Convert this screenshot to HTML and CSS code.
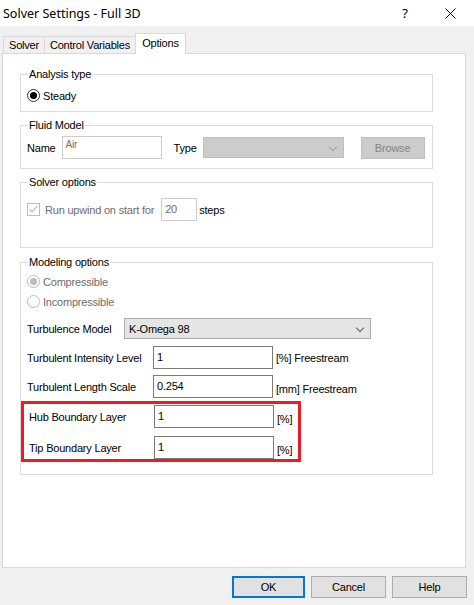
FILE: index.html
```html
<!DOCTYPE html>
<html lang="en">
<head>
  <meta charset="UTF-8" />
  <title>Solver Settings - Full 3D</title>
  <link rel="stylesheet" href="styles.css">
</head>
<body>
  <div class="titlebar">
    <span class="caption">Solver Settings - Full 3D</span>
    <span class="help-btn">?</span>
    <span class="close-btn">
      <svg width="11" height="11" viewBox="0 0 11 11"><path d="M0.5 0.5 L10.5 10.5 M10.5 0.5 L0.5 10.5" stroke="#000" stroke-width="1" fill="none"/></svg>
    </span>
  </div>

  <div class="tabs">
    <div class="tab t-solver">Solver</div>
    <div class="tab t-vars">Control Variables</div>
    <div class="tab t-options active">Options</div>
  </div>

  <div class="panel">
    <fieldset class="group g-analysis">
      <legend>Analysis type</legend>
      <label class="radio-row"><span class="radio checked"></span>Steady</label>
    </fieldset>

    <fieldset class="group g-fluid">
      <legend>Fluid Model</legend>
      <div class="row">
        <span class="lbl">Name</span>
        <span class="field disabled name-field">Air</span>
        <span class="lbl type-lbl">Type</span>
        <span class="combo disabled type-combo"><span class="chev"></span></span>
        <span class="btn disabled browse">Browse</span>
      </div>
    </fieldset>

    <fieldset class="group g-solver">
      <legend>Solver options</legend>
      <div class="row">
        <span class="check"><svg width="11" height="11" viewBox="0 0 11 11"><path d="M1.5 5.5 L4 8 L9.5 2" stroke="#bcbcbc" stroke-width="1.2" fill="none"/></svg></span>
        <span class="muted run-lbl">Run upwind on start for</span>
        <span class="field disabled steps-field">20</span>
        <span class="lbl">steps</span>
      </div>
    </fieldset>

    <fieldset class="group g-model">
      <legend>Modeling options</legend>
      <label class="radio-row muted"><span class="radio off dot"></span>Compressible</label>
      <label class="radio-row muted second"><span class="radio off"></span>Incompressible</label>

      <div class="row turb-row">
        <span class="lbl turb-lbl">Turbulence Model</span>
        <span class="combo turb-combo">K-Omega 98<span class="chev"></span></span>
      </div>

      <div class="row param">
        <span class="lbl param-lbl">Turbulent Intensity Level</span>
        <span class="field">1</span>
        <span class="unit">[%] Freestream</span>
      </div>
      <div class="row param length">
        <span class="lbl param-lbl">Turbulent Length Scale</span>
        <span class="field">0.254</span>
        <span class="unit low">[mm] Freestream</span>
      </div>

      <div class="highlight">
        <div class="row param">
          <span class="lbl param-lbl">Hub Boundary Layer</span>
          <span class="field">1</span>
          <span class="unit low">[%]</span>
        </div>
        <div class="row param tip">
          <span class="lbl param-lbl">Tip Boundary Layer</span>
          <span class="field">1</span>
          <span class="unit low">[%]</span>
        </div>
      </div>
    </fieldset>
  </div>

  <div class="actions">
    <span class="btn default">OK</span>
    <span class="btn">Cancel</span>
    <span class="btn">Help</span>
  </div>
</body>
</html>
```

FILE: styles.css
```css
body {
  margin: 0;
  background: #f0f0f0;
  font-family: "Liberation Sans", Arial, sans-serif;
  font-size: 11px;
  letter-spacing: -0.2px;
  color: #000;
}

/* window caption */
.titlebar {
  height: 26px;
  background: #fff;
  display: flex;
  align-items: center;
  padding-left: 3px;
  letter-spacing: 0;
}
.caption {
  font-family: "Noto Sans", sans-serif;
  font-size: 12.5px;
  flex: 1;
}
.help-btn {
  font-family: "Noto Sans", sans-serif;
  font-size: 13px;
  margin-right: 37px;
}
.close-btn {
  display: flex;
  margin-right: 18px;
}

/* tab strip */
.tabs {
  height: 27px;
  display: flex;
  align-items: flex-end;
  padding-left: 3px;
}
.tab {
  height: 16px;
  line-height: 16px;
  box-sizing: content-box;
  border: 1px solid #d9d9d9;
  border-bottom: none;
  border-right: none;
  text-align: center;
  background: #f0f0f0;
}
.t-solver { width: 40px; }
.t-vars { width: 90px; }
.tab.active {
  width: 49px;
  height: 20px;
  line-height: 19px;
  background: #fff;
  border-right: 1px solid #d9d9d9;
  margin-bottom: -1px;
  position: relative;
}

.panel {
  margin-left: 2px;
  width: 464px;
  height: 515px;
  box-sizing: border-box;
  background: #fff;
  border: 1px solid #d9d9d9;
  padding: 13px 0 0 17px;
}

/* group boxes */
.group {
  width: 413px;
  box-sizing: border-box;
  margin: 0;
  border: 1px solid #dcdcdc;
  padding: 0 6px 0 6px;
}
.group legend {
  padding: 0 1px;
  margin-left: 1px;
  line-height: 14px;
}
.g-analysis { padding-top: 8px; padding-bottom: 9px; }
.g-fluid { margin-top: 6px; padding-top: 4px; padding-bottom: 9px; }
.g-solver { margin-top: 6px; padding-top: 9px; padding-bottom: 26px; }
.g-model { margin-top: 7px; padding-top: 6px; padding-bottom: 12px; }

.row {
  display: flex;
  align-items: center;
}
.lbl { white-space: nowrap; }
.muted { color: #6d6d6d; }

.radio-row {
  display: flex;
  align-items: center;
  height: 13px;
  gap: 3px;
}
.radio-row.second { margin-top: 7px; }
.radio {
  width: 11px;
  height: 11px;
  border: 1px solid #333;
  border-radius: 50%;
  display: flex;
  align-items: center;
  justify-content: center;
}
.radio.checked::after {
  content: "";
  width: 7px;
  height: 7px;
  border-radius: 50%;
  background: #000;
}
.radio.off { border-color: #bcbcbc; }
.radio.dot::after {
  content: "";
  width: 7px;
  height: 7px;
  border-radius: 50%;
  background: #bcbcbc;
}

.check {
  width: 11px;
  height: 11px;
  border: 1px solid #bcbcbc;
  display: flex;
  margin-right: 5px;
}
.run-lbl { margin-right: 7px; }

/* edit boxes */
.field {
  width: 120px;
  height: 23px;
  box-sizing: border-box;
  border: 1px solid #7a7a7a;
  background: #fff;
  padding: 4px 0 0 3px;
  line-height: 13px;
}
.field.disabled {
  border-color: #cccccc;
  color: #6d6d6d;
}
.name-field { width: 100px; margin-left: 6px; padding-top: 1px; font-size: 10px; }
.steps-field { width: 36px; margin-right: 2px; }

.combo {
  height: 21px;
  box-sizing: border-box;
  border: 1px solid #acacac;
  background: #e5e5e5;
  display: flex;
  align-items: center;
  padding-left: 4px;
  position: relative;
}
.combo.disabled {
  background: #cccccc;
  border-color: #bfbfbf;
}
.chev {
  position: absolute;
  right: 7px;
  top: 6px;
  width: 5px;
  height: 5px;
  border-right: 1px solid #606060;
  border-bottom: 1px solid #606060;
  transform: rotate(45deg);
}
.combo.disabled .chev { border-color: #a6a6a6; }
.type-lbl { margin-left: 12px; margin-right: 6px; }
.type-combo { width: 141px; }
.turb-row { margin-top: 10px; }
.turb-lbl { width: 97px; }
.turb-combo { width: 247px; }

.param { margin-top: 7px; }
.param.length { margin-top: 6px; }
.param-lbl { width: 126px; }
.unit { margin-left: 3px; }
.unit.low { padding-top: 5px; }

.highlight {
  border: 3px solid #ed1c24;
  width: 280px;
  box-sizing: border-box;
  margin: 3px 0 0 -6px;
  padding: 1px 0 0 5px;
}
.highlight .param { margin-top: 0; }
.highlight .tip { margin-top: 8px; }
.highlight .param-lbl { width: 125px; }

/* push buttons */
.btn {
  width: 75px;
  height: 22px;
  box-sizing: border-box;
  border: 1px solid #adadad;
  background: #e1e1e1;
  display: flex;
  align-items: center;
  justify-content: center;
}
.btn.disabled {
  background: #cccccc;
  border-color: #bfbfbf;
  color: #838383;
}
.browse { width: 64px; margin-left: 17px; }
.btn.default { border: 2px solid #0078d7; width: 73px; }

.actions {
  display: flex;
  justify-content: flex-end;
  gap: 6px;
  padding: 8px 7px 0 0;
}
```
